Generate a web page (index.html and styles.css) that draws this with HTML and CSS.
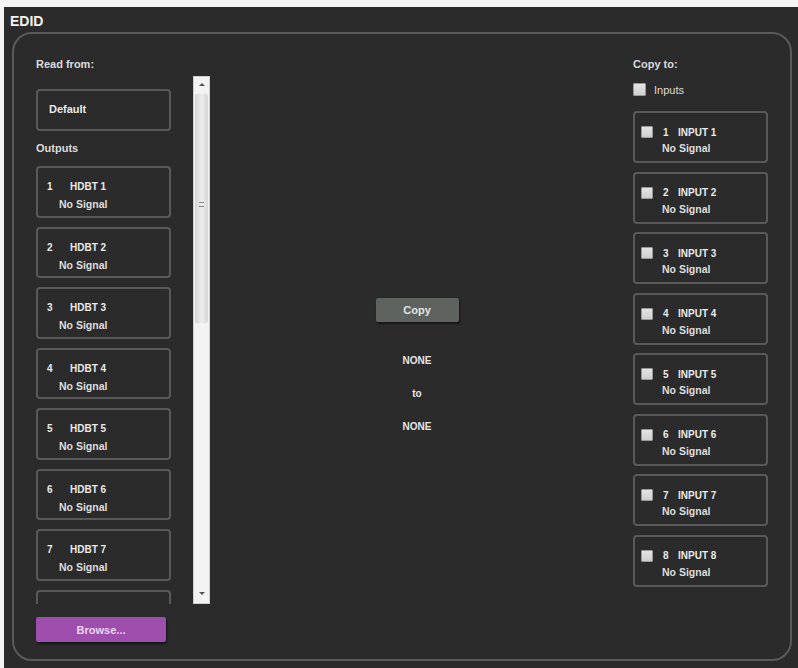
FILE: index.html
```html
<!DOCTYPE html>
<html lang="en">
  <head>
    <meta charset="UTF-8" />
    <meta name="viewport" content="width=device-width, initial-scale=1.0" />
    <title>EDID</title>
    <link rel="stylesheet" href="styles.css">
  </head>
  <body>
    <div class="page">
      <h1 class="title">EDID</h1>

      <div class="panel">
        <!-- Read from -->
        <div class="col-left">
          <div class="label">Read from:</div>
          <div class="scroll-area">
            <div class="list">
              <div class="box box-default">Default</div>
              <div class="label outputs-label">Outputs</div>
              <div class="box"><div class="box-title"><span class="num">1</span>HDBT 1</div><div class="signal">No Signal</div></div>
              <div class="box"><div class="box-title"><span class="num">2</span>HDBT 2</div><div class="signal">No Signal</div></div>
              <div class="box"><div class="box-title"><span class="num">3</span>HDBT 3</div><div class="signal">No Signal</div></div>
              <div class="box"><div class="box-title"><span class="num">4</span>HDBT 4</div><div class="signal">No Signal</div></div>
              <div class="box"><div class="box-title"><span class="num">5</span>HDBT 5</div><div class="signal">No Signal</div></div>
              <div class="box"><div class="box-title"><span class="num">6</span>HDBT 6</div><div class="signal">No Signal</div></div>
              <div class="box"><div class="box-title"><span class="num">7</span>HDBT 7</div><div class="signal">No Signal</div></div>
              <!-- 8th output is scrolled out of view -->
              <div class="box"></div>
            </div>
            <div class="scrollbar">
              <div class="arrow arrow-up"></div>
              <div class="thumb"><span class="grip"></span></div>
              <div class="track"></div>
              <div class="arrow arrow-down"></div>
            </div>
          </div>
          <button class="btn btn-browse">Browse...</button>
        </div>

        <!-- Copy -->
        <div class="col-center">
          <button class="btn btn-copy">Copy</button>
          <div class="status">NONE</div>
          <div class="status">to</div>
          <div class="status">NONE</div>
        </div>

        <!-- Copy to -->
        <div class="col-right">
          <div class="label">Copy to:</div>
          <label class="check-row"><span class="check"></span>Inputs</label>
          <div class="inputs">
            <div class="box box-input"><div class="box-title"><span class="check"></span><span class="inum">1</span>INPUT 1</div><div class="signal">No Signal</div></div>
            <div class="box box-input"><div class="box-title"><span class="check"></span><span class="inum">2</span>INPUT 2</div><div class="signal">No Signal</div></div>
            <div class="box box-input"><div class="box-title"><span class="check"></span><span class="inum">3</span>INPUT 3</div><div class="signal">No Signal</div></div>
            <div class="box box-input"><div class="box-title"><span class="check"></span><span class="inum">4</span>INPUT 4</div><div class="signal">No Signal</div></div>
            <div class="box box-input"><div class="box-title"><span class="check"></span><span class="inum">5</span>INPUT 5</div><div class="signal">No Signal</div></div>
            <div class="box box-input"><div class="box-title"><span class="check"></span><span class="inum">6</span>INPUT 6</div><div class="signal">No Signal</div></div>
            <div class="box box-input"><div class="box-title"><span class="check"></span><span class="inum">7</span>INPUT 7</div><div class="signal">No Signal</div></div>
            <div class="box box-input"><div class="box-title"><span class="check"></span><span class="inum">8</span>INPUT 8</div><div class="signal">No Signal</div></div>
          </div>
        </div>
      </div>
    </div>
  </body>
</html>
```

FILE: styles.css
```css
html, body {
  margin: 0;
  height: 100%;
  background: #f4f4f4;
}

body {
  font-family: "Liberation Sans", Arial, sans-serif;
  color: #e6e6e6;
  overflow: hidden;
}

.page {
  margin: 7px 0 0 4px;
  height: 661px;
  background: #2b2b2b;
  padding-top: 1px;
  box-sizing: border-box;
}

.title {
  margin: 5px 0 0 6px;
  font-size: 14px;
  font-weight: bold;
  line-height: 16px;
  color: #f2f2f2;
}

/* Main panel */
.panel {
  margin: 3px 6px 0 8px;
  height: 629px;
  border: 2px solid #5a5a5a;
  border-radius: 20px;
  box-sizing: border-box;
  display: flex;
  padding: 24px 22px 0 22px;
}

.label {
  font-size: 11px;
  line-height: 13px;
  font-weight: bold;
  color: #dcdcdc;
}

.box {
  border: 2px solid #595959;
  border-radius: 4px;
  box-sizing: border-box;
  font-size: 10px;
  font-weight: bold;
  color: #eaeaea;
}

/* Left column */
.col-left {
  width: 175px;
}

.scroll-area {
  display: flex;
  justify-content: space-between;
  height: 528px;
  margin-top: 5px;
}

.list {
  width: 135px;
  overflow: hidden;
  padding-top: 13px;
}

.box-default {
  height: 42px;
  font-size: 11px;
  padding: 12px 0 0 11px;
}

.outputs-label {
  margin: 11px 0 11px;
}

.list .box {
  margin-bottom: 9px;
}

.list .box:not(.box-default) {
  height: 51.5px;
  padding: 13px 0 0 9px;
}

.num {
  display: inline-block;
  width: 23px;
}

.signal {
  font-size: 10.5px;
  font-weight: bold;
  color: #dedede;
  margin-top: 6px;
}

.list .signal {
  padding-left: 12px;
}

.scrollbar {
  width: 17px;
  height: 100%;
  background: #f3f3f3;
  display: flex;
  flex-direction: column;
  border: 1px solid #cfcfcf;
  box-sizing: border-box;
  margin-right: 1px;
}

.arrow {
  height: 17px;
  position: relative;
}

.arrow::after {
  content: "";
  position: absolute;
  left: 5px;
  top: 6px;
  border-left: 3px solid transparent;
  border-right: 3px solid transparent;
}

.arrow-up::after {
  border-bottom: 3px solid #555;
}

.arrow-down::after {
  border-top: 3px solid #555;
}

.thumb {
  height: 229px;
  margin: 0 1px;
  background: linear-gradient(to right, #d4d4d4, #ececec 50%, #d6d6d6);
  border-radius: 2px;
  display: flex;
  align-items: center;
  justify-content: center;
}

.grip {
  width: 5px;
  height: 5px;
  border-top: 1px solid #888;
  border-bottom: 1px solid #888;
  box-sizing: border-box;
  position: relative;
  top: -4px;
}

.track {
  flex: 1;
}

.btn {
  font-family: "Liberation Sans", Arial, sans-serif;
  font-weight: bold;
  font-size: 11px;
  border: none;
  cursor: pointer;
  border-radius: 2px;
}

.btn-browse {
  display: block;
  margin-top: 13px;
  width: 130px;
  height: 25px;
  background: #9e4fae;
  color: #ecd6f0;
  box-shadow: 1px 2px 2px rgba(0, 0, 0, 0.5);
}

/* Center column */
.col-center {
  flex: 1;
  display: flex;
  flex-direction: column;
  align-items: center;
  padding-top: 240px;
  padding-right: 10px;
}

.btn-copy {
  width: 83px;
  height: 24px;
  background: #5f635f;
  color: #e4e4e4;
  box-shadow: 1px 2px 2px rgba(0, 0, 0, 0.5);
  margin-bottom: 33px;
}

.status {
  font-size: 10px;
  font-weight: bold;
  line-height: 12px;
  margin-bottom: 21px;
}

/* Right column */
.col-right {
  width: 135px;
}

.check-row {
  display: flex;
  align-items: center;
  font-size: 11px;
  color: #dcdcdc;
  margin-top: 12px;
}

.check {
  display: inline-block;
  width: 13px;
  height: 13px;
  background: linear-gradient(#e4e4e4, #cfcfcf);
  border: 1px solid #9a9a9a;
  box-sizing: border-box;
  border-radius: 1px;
  margin-right: 8px;
}

.inputs {
  margin-top: 15px;
  display: flex;
  flex-direction: column;
  gap: 8.5px;
}

.box-input {
  height: 52px;
  padding: 13px 0 0 6px;
}

.box-input .box-title {
  display: flex;
  align-items: center;
}

.box-input .check {
  width: 12px;
  height: 12px;
  margin-right: 10px;
}

.inum {
  width: 15px;
}

.box-input .signal {
  padding-left: 21px;
  margin-top: 4px;
}
```
